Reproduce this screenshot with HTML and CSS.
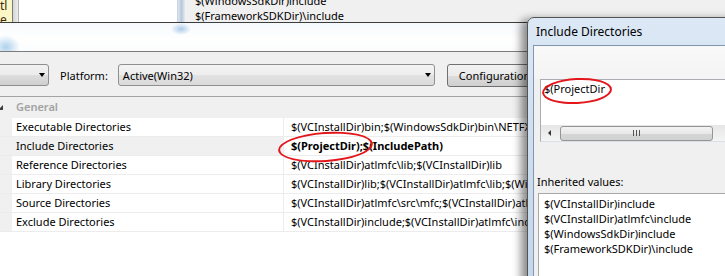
FILE: index.html
```html
<!DOCTYPE html>
<html>
<head>
<meta charset="utf-8">
<link rel="stylesheet" href="styles.css">
</head>
<body>
<div class="screen">
  <div class="backwin">
    <div class="bw-tip"><span>tl</span><span>e</span></div>
    <div class="bw-bar"></div>
    <div class="bw-white"></div>
    <div class="bw-scroll"></div>
    <div class="bw-text">
      <div>$(WindowsSdkDir)include</div>
      <div>$(FrameworkSDKDir)\include</div>
    </div>
  </div>
  <div class="glass"></div>
  <div class="toolbar">
    <div class="combo c1"><span class="arrow"></span></div>
    <span class="lbl">Platform:</span>
    <div class="combo c2"><span>Active(Win32)</span><span class="arrow"></span></div>
    <div class="btn">Configuration Manager...</div>
  </div>
  <div class="grid">
    <div class="row head">
      <div class="gut"><span class="tri"></span></div>
      <div class="name">General</div>
    </div>
    <div class="row">
      <div class="gut"></div>
      <div class="name">Executable Directories</div>
      <div class="val">$(VCInstallDir)bin;$(WindowsSdkDir)bin\NETFX 4.0 Tools;$(WindowsSdkDir)bin</div>
    </div>
    <div class="row sel">
      <div class="gut"></div>
      <div class="name">Include Directories</div>
      <div class="val bold">$(ProjectDir);$(IncludePath)</div>
    </div>
    <div class="row">
      <div class="gut"></div>
      <div class="name">Reference Directories</div>
      <div class="val">$(VCInstallDir)atlmfc\lib;$(VCInstallDir)lib</div>
    </div>
    <div class="row">
      <div class="gut"></div>
      <div class="name">Library Directories</div>
      <div class="val">$(VCInstallDir)lib;$(VCInstallDir)atlmfc\lib;$(WindowsSdkDir)lib</div>
    </div>
    <div class="row">
      <div class="gut"></div>
      <div class="name">Source Directories</div>
      <div class="val">$(VCInstallDir)atlmfc\src\mfc;$(VCInstallDir)atlmfc\src\mfcm</div>
    </div>
    <div class="row">
      <div class="gut"></div>
      <div class="name">Exclude Directories</div>
      <div class="val">$(VCInstallDir)include;$(VCInstallDir)atlmfc\include</div>
    </div>
  </div>
  <div class="ring ring1"></div>

  <div class="dialog">
    <div class="dlg-title">Include Directories</div>
    <div class="dlg-body">
      <div class="dlg-top"></div>
      <div class="edit">
        <div class="edit-text">$(ProjectDir</div>
        <div class="hscroll">
          <span class="sarrow"></span>
          <div class="thumb"><span class="grip"></span></div>
        </div>
      </div>
      <div class="inh-label">Inherited values:</div>
      <div class="inh-box">
        <div>$(VCInstallDir)include</div>
        <div>$(VCInstallDir)atlmfc\include</div>
        <div>$(WindowsSdkDir)include</div>
        <div>$(FrameworkSDKDir)\include</div>
      </div>
    </div>
    <div class="ring ring2"></div>
  </div>
</div>
</body>
</html>
```
FILE: styles.css
```css
* { box-sizing: border-box; }
html, body { margin: 0; padding: 0; }
body {
  width: 725px;
  height: 276px;
  overflow: hidden;
  background: #ffffff;
  font-family: "Noto Sans", "Open Sans", sans-serif;
  font-size: 11px;
  color: #000;
}
.screen {
  position: relative;
  width: 725px;
  height: 276px;
  overflow: hidden;
  display: flex;
  flex-direction: column;
}

/* background window strip */
.backwin {
  height: 22px;
  flex: none;
  display: flex;
  background: #f0f0f0;
  overflow: hidden;
}
.bw-tip {
  width: 12px;
  background: #fdf7c6;
  display: flex;
  flex-direction: column;
  font-size: 12px;
  line-height: 14px;
  color: #3a2a10;
  overflow: hidden;
  white-space: nowrap;
  margin-top: -1px;
}
.bw-bar {
  width: 6px;
  border-left: 1px solid #7a7a7a;
  background: linear-gradient(90deg, #d6d6d6, #ececec);
}
.bw-white {
  width: 159px;
  background: #fff;
  border-left: 1px solid #b5b5b5;
}
.bw-scroll {
  width: 8px;
  background: linear-gradient(90deg, #dde6f0, #b8c8da, #e4eaf1);
  border-left: 1px solid #c9d4e0;
}
.bw-text {
  width: 340px;
  padding-left: 10px;
  margin-top: -7px;
  line-height: 15px;
  color: #000;
  white-space: nowrap;
}

/* glass title bar of the property pages window */
.glass {
  height: 30px;
  flex: none;
  border-top: 1px solid #3d3d3d;
  border-bottom: 1px solid #7c7c7c;
  background:
    radial-gradient(ellipse 14px 12px at 6px 24px, rgba(140,190,230,0.7), rgba(140,190,230,0) 100%),
    radial-gradient(ellipse 10px 6px at 181px 6px, rgba(120,170,220,0.6), rgba(120,170,220,0) 100%),
    linear-gradient(180deg, #f6f9fc 0%, #ffffff 60%, #fbfcfd 100%);
}

/* toolbar with combos */
.toolbar {
  height: 44px;
  flex: none;
  background: #f0f0f0;
  display: flex;
  align-items: center;
  padding-top: 2px;
  white-space: nowrap;
}
.combo {
  height: 22px;
  border: 1px solid #8e8f8f;
  border-radius: 3px;
  display: flex;
  align-items: center;
  position: relative;
}
.c1 {
  width: 60px;
  margin-left: -11px;
  background: linear-gradient(180deg, #f2f2f2 0%, #ebebeb 50%, #dddddd 51%, #cfcfcf 100%);
}
.c2 {
  width: 317px;
  margin-left: 10px;
  padding-left: 4px;
  background: linear-gradient(180deg, #f4f4f4 0%, #ededed 50%, #e2e2e2 51%, #dadada 100%);
}
.arrow {
  position: absolute;
  right: 3px;
  top: 8px;
  width: 0;
  height: 0;
  border-left: 3.5px solid transparent;
  border-right: 3.5px solid transparent;
  border-top: 4px solid #000;
}
.lbl { margin-left: 11px; }
.btn {
  margin-left: 12px;
  height: 23px;
  padding-left: 11px;
  width: 120px;
  border: 1px solid #707070;
  border-radius: 3px;
  display: flex;
  align-items: center;
  background: linear-gradient(180deg, #f2f2f2 0%, #ebebeb 50%, #dddddd 51%, #cfcfcf 100%);
  overflow: hidden;
}

/* property grid */
.grid {
  flex: 1;
  width: 528px;
  overflow: hidden;
  border-top: 1px solid #a3a3a3;
  background: #fff;
}
.row {
  display: flex;
  height: 19px;
  border-bottom: 1px solid #ececec;
  white-space: nowrap;
}
.row.head {
  height: 21px;
  background: #f0f0f0;
  border-bottom: 1px solid #f0f0f0;
}
.gut {
  width: 12px;
  flex: none;
  background: #f0f0f0;
  position: relative;
}
.tri {
  position: absolute;
  left: -2px;
  top: 8px;
  width: 0;
  height: 0;
  border-left: 5px solid transparent;
  border-bottom: 5px solid #404040;
}
.name {
  width: 272px;
  flex: none;
  padding-left: 4px;
  line-height: 18px;
  border-right: 1px solid #ececec;
}
.head .name {
  color: #a2a2a2;
  font-weight: 600;
  line-height: 20px;
  border-right: none;
}
.sel .name { background: #f0f0f0; }
.val {
  flex: 1;
  min-width: 0;
  padding-left: 7px;
  line-height: 18px;
  overflow: hidden;
}
.val.bold { font-weight: 700; }

/* annotation rings */
.ring {
  position: absolute;
  border: 2px solid #e3161b;
  border-radius: 50%;
}
.ring1 {
  left: 278px;
  top: 132px;
  width: 95px;
  height: 30px;
  transform: rotate(-4deg);
}
.ring2 {
  left: 14px;
  top: 60px;
  width: 70px;
  height: 26px;
  transform: rotate(-3deg);
}

/* include directories dialog */
.dialog {
  position: absolute;
  left: 527px;
  top: 17px;
  width: 230px;
  height: 290px;
  border: 1px solid #545454;
  border-radius: 7px 7px 0 0;
  padding: 0 0 0 5px;
  background: linear-gradient(180deg, #dce8f5 0%, #cfdff0 40%, #c2d5ea 100%);
  box-shadow: -6px 2px 9px rgba(0,0,0,0.45);
  display: flex;
  flex-direction: column;
}
.dlg-title {
  height: 27px;
  flex: none;
  line-height: 28px;
  font-size: 12px;
  padding-left: 3px;
  color: #000;
  white-space: nowrap;
}
.dlg-body {
  flex: 1;
  background: #f0f0f0;
  border-top: 1px solid #8396b0;
  border-left: 1px solid #8396b0;
  display: flex;
  flex-direction: column;
}
.dlg-top {
  height: 33px;
  flex: none;
  background: linear-gradient(180deg, #f9f9f9, #f4f4f4);
}
.edit {
  margin-left: 6px;
  height: 63px;
  background: #fff;
  border-top: 1px solid #abadb3;
  border-left: 1px solid #abadb3;
  border-bottom: 1px solid #dbdfe6;
  display: flex;
  flex-direction: column;
  justify-content: space-between;
}
.edit-text {
  padding-left: 3px;
  line-height: 18px;
  white-space: nowrap;
}
.hscroll {
  height: 16px;
  background: linear-gradient(180deg, #e6e6e6, #f4f4f4);
  display: flex;
  align-items: center;
  position: relative;
}
.sarrow {
  margin-left: 7px;
  width: 0;
  height: 0;
  border-top: 3px solid transparent;
  border-bottom: 3px solid transparent;
  border-right: 3px solid #333;
}
.thumb {
  margin-left: 9px;
  width: 153px;
  height: 15px;
  border: 1px solid #959595;
  border-radius: 3px;
  background: linear-gradient(180deg, #f3f3f3 0%, #e8e8e8 50%, #d6d6d6 51%, #d0d0d0 100%);
  display: flex;
  align-items: center;
  justify-content: center;
}
.grip {
  width: 7px;
  height: 6px;
  background: repeating-linear-gradient(90deg, #555 0 1px, transparent 1px 3px);
}
.inh-label {
  margin-top: 32px;
  padding-left: 3px;
  line-height: 15px;
  white-space: nowrap;
}
.inh-box {
  margin-top: 4px;
  margin-left: 4px;
  flex: 1;
  background: #fff;
  border-top: 1px solid #a8a8a8;
  border-left: 1px solid #a8a8a8;
  padding: 2px 0 0 5px;
  line-height: 15px;
  white-space: nowrap;
}
```
